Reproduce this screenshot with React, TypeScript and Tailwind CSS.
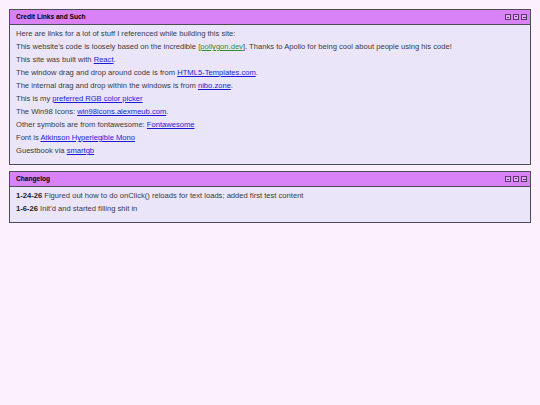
import type { ReactNode } from 'react'

function WinButtons() {
  return (
    <div className="flex items-center gap-[2px]">
      <span className="flex h-[6px] w-[6px] items-end justify-center border border-[#5a3a6a] bg-[#e6a6f7] pb-[1px]">
        <span className="h-[1px] w-[2px] bg-[#5a3a6a]" />
      </span>
      <span className="flex h-[6px] w-[6px] items-center justify-center border border-[#5a3a6a] bg-[#e6a6f7]">
        <span className="h-[2px] w-[2px] border-t border-[#5a3a6a]" />
      </span>
      <span className="flex h-[6px] w-[6px] items-center justify-center border border-[#5a3a6a] bg-[#e6a6f7]">
        <span className="h-[1px] w-[3px] bg-[#5a3a6a]" />
      </span>
    </div>
  )
}

function Window({ title, children }: { title: string; children: ReactNode }) {
  return (
    <div className="border border-[#4f4a58] bg-[#ebe5fa]">
      <div className="flex h-[15px] items-center justify-between border-b border-[#4f4a58] bg-[#d982f7] pl-[6px] pr-[3px]">
        <span className="text-[6.6px] font-bold text-black">{title}</span>
        <WinButtons />
      </div>
      <div className="flex flex-col px-[6px] pb-[7px] pt-[2px] text-[7.6px] leading-[13px] text-[#3a3a3a]">
        {children}
      </div>
    </div>
  )
}

function A({ children }: { children: ReactNode }) {
  return <a className="text-[#1a1ad6] underline">{children}</a>
}

export default function App() {
  return (
    <div
      className="min-h-[405px] w-full bg-[#fcf0fd] px-[9px] pt-[9px]"
      style={{ fontFamily: '"Liberation Sans", Arial, sans-serif' }}
    >
      <div className="flex flex-col gap-[6px]">
        <Window title="Credit Links and Such">
          <p>Here are links for a lot of stuff I referenced while building this site:</p>
          <p>
            This website's code is loosely based on the incredible{' '}
            <span className="text-[#2f8f2f]">
              [<a className="underline">pollygon.dev</a>
            </span>
            ]. Thanks to Apollo for being cool about people using his code!
          </p>
          <p>
            This site was built with <A>React</A>.
          </p>
          <p>
            The window drag and drop around code is from <A>HTML5-Templates.com</A>.
          </p>
          <p>
            The internal drag and drop within the windows is from <A>nibo.zone</A>.
          </p>
          <p>
            This is my <A>preferred RGB color picker</A>
          </p>
          <p>
            The Win98 Icons: <A>win98icons.alexmeub.com</A>.
          </p>
          <p>
            Other symbols are from fontawesome: <A>Fontawesome</A>
          </p>
          <p>
            Font is <A>Atkinson Hyperlegible Mono</A>
          </p>
          <p>
            Guestbook via <A>smartgb</A>
          </p>
        </Window>
        <Window title="Changelog">
          <p>
            <b className="text-[#222]">1-24-26</b> Figured out how to do onClick() reloads for text loads; added first test content
          </p>
          <p>
            <b className="text-[#222]">1-6-26</b> Init'd and started filling shit in
          </p>
        </Window>
      </div>
    </div>
  )
}
